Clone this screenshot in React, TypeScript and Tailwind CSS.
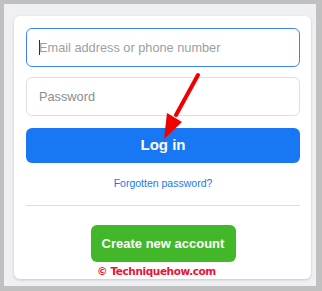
export default function App() {
  return (
    <div className="h-[291px] w-[322px] bg-[#c0c0c0] pl-1 pt-1 font-['Liberation_Sans',Arial,sans-serif]">
      <div className="h-[282px] w-[312px] bg-[#eef0f3] pl-[10px] pt-[12px]">
        <div className="relative flex h-[263px] w-[297px] flex-col rounded-md bg-white pl-3 pr-[11px] pt-3 shadow-[0_1px_3px_rgba(0,0,0,0.18)]">
          <div className="flex h-[39px] items-center rounded-md border border-[#3c86ef] px-3">
            <span className="mr-[-1px] h-[15px] w-px bg-[#1c2b5a]" />
            <span className="text-[12.75px] text-[#9a9fa6]">Email address or phone number</span>
          </div>
          <div className="mt-[10px] flex h-[39px] items-center rounded-md border border-[#dddfe2] px-3">
            <span className="text-[12.75px] text-[#8a8d91]">Password</span>
          </div>
          <button
            type="button"
            className="mt-3 flex h-[35px] items-center justify-center rounded-md bg-[#1877f2] text-[15px] font-bold text-white"
          >
            Log in
          </button>
          <a className="mt-[13px] text-center text-[10.5px] leading-[14px] text-[#1877f2]">Forgotten password?</a>
          <div className="mt-[15px] h-px bg-[#dadde1]" />
          <button
            type="button"
            className="mx-auto mt-[19px] flex h-[37px] w-[145px] items-center justify-center rounded-md bg-[#42b72a] text-[13px] font-bold text-white"
          >
            Create new account
          </button>
          <p className="mt-[3px] pr-[13px] text-center font-['DejaVu_Sans',Verdana,sans-serif] text-[10.5px] font-bold leading-[13px] tracking-[-0.4px] text-[#ee1133]">
            © Techniquehow.com
          </p>

          {/* annotation arrow */}
          <svg className="pointer-events-none absolute left-0 top-0" width="297" height="263" viewBox="14 16 297 263">
            <line x1="198" y1="75" x2="176" y2="115" stroke="#f20000" strokeWidth="4" strokeLinecap="round" />
            <polygon points="164,139 167,113 182,122" fill="#f20000" />
          </svg>
        </div>
      </div>
    </div>
  );
}
